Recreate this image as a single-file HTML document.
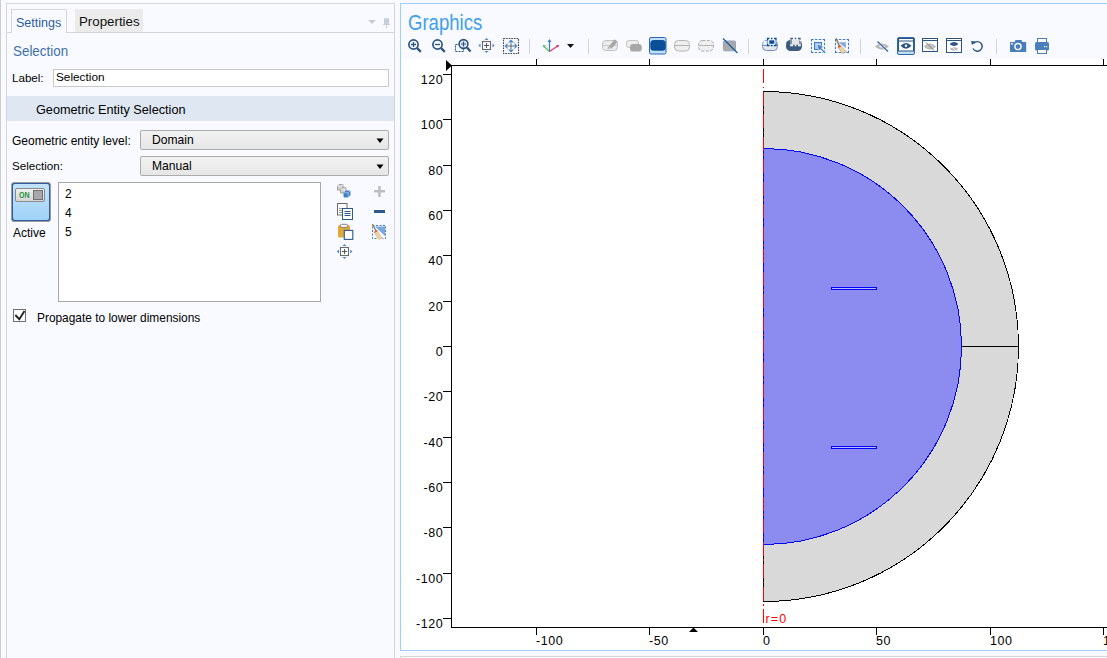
<!DOCTYPE html>
<html><head><meta charset="utf-8">
<style>
html,body{margin:0;padding:0;}
body{width:1107px;height:658px;overflow:hidden;position:relative;background:#f8faff;font-family:"Liberation Sans",sans-serif;color:#000;}
.a{position:absolute;}
.t{position:absolute;white-space:nowrap;line-height:1;font-size:12px;}
</style></head><body>
<!-- far-left line -->
<div class="a" style="left:0;top:0;width:1px;height:658px;background:#cdcdcd"></div>

<!-- ===== LEFT SETTINGS PANEL ===== -->
<div class="a" style="left:6px;top:3px;width:387px;height:700px;border:1px solid #d6d6d6;background:#f8faff"></div>
<!-- tab strip line -->
<div class="a" style="left:7px;top:32px;width:387px;height:1px;background:#d6d6d6"></div>
<!-- Settings tab -->
<div class="a" style="left:11px;top:9px;width:54px;height:23px;border:1px solid #d6d6d6;border-bottom:none;background:#f8faff"></div>
<div class="t" id="tSettings" style="left:16px;top:17px;font-size:12.5px;color:#2e5c9c">Settings</div>
<!-- Properties tab -->
<div class="a" style="left:75px;top:9px;width:68px;height:23px;background:#ebebeb"></div>
<div class="t" id="tProps" style="left:79px;top:15px;font-size:13.3px;color:#111">Properties</div>
<!-- header icons -->
<svg class="a" style="left:360px;top:14px" width="34" height="18">
  <path d="M8 6 L16 6 L12 10 Z" fill="#c5cbd6"/>
  <path d="M24 4.3 H29 V10 H30 V11 H27 V14.3 H26 V11 H23 V10 H24 Z" fill="#c8cfdb"/>
</svg>

<div class="t" id="tSel" style="left:13.3px;top:43.3px;font-size:15.4px;color:#4070ae;transform:scaleX(0.87);transform-origin:0 0">Selection</div>

<div class="t" id="tLabel" style="left:12px;top:72px;font-size:11.6px">Label:</div>
<div class="a" style="left:53px;top:69px;width:334px;height:16px;border:1px solid #c9c9c9;background:#fff"></div>
<div class="t" id="tLabelV" style="left:56px;top:72.2px;font-size:11.8px">Selection</div>

<div class="a" style="left:7px;top:96px;width:387px;height:25px;background:#dee7f2"></div>
<div class="t" id="tGES" style="left:36px;top:104px;font-size:12.7px">Geometric Entity Selection</div>

<div class="t" id="tGEL" style="left:12px;top:135px;">Geometric entity level:</div>
<div class="a" style="left:140px;top:130px;width:247px;height:18px;border:1px solid #acacac;border-radius:2px;background:linear-gradient(#f2f2f2,#e6e6e6)"></div>
<div class="t" id="tDom" style="left:152px;top:134.2px;font-size:12.1px">Domain</div>
<svg class="a" style="left:376px;top:138px" width="9" height="6"><path d="M0.5 0.5 H7.5 L4 5 Z" fill="#000"/></svg>

<div class="t" id="tSelL" style="left:12px;top:159.7px;font-size:11.6px">Selection:</div>
<div class="a" style="left:140px;top:156px;width:247px;height:18px;border:1px solid #acacac;border-radius:2px;background:linear-gradient(#f2f2f2,#e6e6e6)"></div>
<div class="t" id="tMan" style="left:152px;top:160.2px;font-size:12.1px">Manual</div>
<svg class="a" style="left:376px;top:164px" width="9" height="6"><path d="M0.5 0.5 H7.5 L4 5 Z" fill="#000"/></svg>

<!-- Active toggle -->
<div class="a" style="left:11px;top:182px;width:38px;height:38px;border:1px solid #9a9a9a;border-radius:3px;background:#2f5e9e"></div><div class="a" style="left:13px;top:184px;width:36px;height:36px;border-radius:2px;background:linear-gradient(#c2e3fb,#a0d2f6)"></div>
<div class="a" style="left:15px;top:188px;width:28px;height:12px;border:1px solid #8a8a8a;border-radius:2px;background:linear-gradient(#efefef,#d6d6d6)"></div>
<div class="t" style="left:18.5px;top:191px;font-size:8.3px;font-weight:bold;color:#1e9636;transform:scaleX(0.85);transform-origin:0 0">ON</div>
<div class="a" style="left:33px;top:189.5px;width:8px;height:8px;border:1px solid #707070;background:#a8a8a8"></div>
<div class="t" id="tActive" style="left:13px;top:227px;">Active</div>

<!-- list box -->
<div class="a" style="left:58px;top:182px;width:261px;height:118px;border:1px solid #a4a7ad;background:#fff"></div>
<div class="t" style="left:65px;top:188px;">2</div>
<div class="t" style="left:65px;top:207px;">4</div>
<div class="t" style="left:65px;top:226px;">5</div>

<!-- list side icons -->
<svg class="a" style="left:330px;top:180px" width="64" height="82">
  <!-- cubes -->
  <g><path d="M7.5 6.15 L9.15 4.5 L13.0 4.5 L13.0 8.35 L11.35 10.0 L7.5 10.0 Z" fill="#cfcfcf" stroke="#9a9a9a" stroke-width="0.9"/><path d="M7.5 6.15 H11.35 V10.0 M11.35 6.15 L13.0 4.5" stroke="#f2f2f2" stroke-width="0.8" fill="none"/><path d="M10.5 9.15 L12.15 7.5 L16.0 7.5 L16.0 11.35 L14.35 13.0 L10.5 13.0 Z" fill="#cfcfcf" stroke="#9a9a9a" stroke-width="0.9"/><path d="M10.5 9.15 H14.35 V13.0 M14.35 9.15 L16.0 7.5" stroke="#f2f2f2" stroke-width="0.8" fill="none"/><path d="M14 12.8 L15.8 11 L20 11 L20 15.2 L18.2 17 L14 17 Z" fill="#3f7fc8" stroke="#3f7fc8" stroke-width="0.9"/><path d="M14 12.8 H18.2 V17 M18.2 12.8 L20 11" stroke="#a9cbf0" stroke-width="0.8" fill="none"/></g>
  <!-- plus -->
  <rect x="44" y="10" width="11" height="2.5" fill="#bdbdbd"/>
  <rect x="48.2" y="6" width="2.5" height="11" fill="#bdbdbd"/>
  <!-- copy -->
  <rect x="7.5" y="23.5" width="9.5" height="11.5" fill="#fff" stroke="#6a6a6a"/><path d="M9 28.5 H12 M9 30.5 H12 M9 32.5 H12" stroke="#9a9a9a"/>
  <rect x="12.5" y="28.5" width="10" height="11" fill="#fff" stroke="#2d5a8c"/>
  <path d="M14.5 31.5 H20.5 M14.5 33.5 H20.5 M14.5 35.5 H20.5" stroke="#2d5a8c"/>
  <!-- minus -->
  <rect x="44" y="30" width="11" height="3" fill="#2d5a8c"/>
  <!-- clipboard -->
  <rect x="8" y="45" width="12" height="12.5" rx="1.5" fill="#e0a83a"/>
  <rect x="10.5" y="44.3" width="7" height="3" rx="1.2" fill="#fff" stroke="#808080"/>
  <rect x="14.3" y="50.4" width="8.5" height="9" fill="#fff" stroke="#2d5a8c" stroke-width="1.1"/>
  <!-- broom box -->
  <rect x="42.5" y="45.5" width="13" height="13" fill="none" stroke="#3f7fc8" stroke-dasharray="2 1.5"/>
  <path d="M45 46.5 L55 46.5 L55 56 Z" fill="#7aa6db"/>
  <path d="M42.5 44 L46.5 52" stroke="#8f7250" stroke-width="1.3"/>
  <path d="M44 53 L48 51 L53 58.5 L48.5 60 Z" fill="#e8cfa4"/>
  <path d="M44 52.5 L47.5 50.5" stroke="#d9533a" stroke-width="1.3"/>
  <!-- move -->
  <rect x="10.5" y="67.5" width="8" height="8" fill="#fff" stroke="#6a6a6a" stroke-width="1.1"/>
  <path d="M14.5 69 V74 M12 71.5 H17" stroke="#555"/>
  <path d="M14.5 64 L16.5 66 H12.5 Z M14.5 79 L16.5 77 H12.5 Z M6.8 71.5 L9 69.5 V73.5 Z M22.4 71.5 L20.2 69.5 V73.5 Z" fill="#4a86cf"/>
</svg>

<!-- checkbox -->
<div class="a" style="left:13px;top:309px;width:11px;height:11px;border:1px solid #6f6f6f;background:#fff"></div>
<svg class="a" style="left:13px;top:309px" width="13" height="13"><path d="M2.3 6 L6.3 10.2 L11.5 2" fill="none" stroke="#222" stroke-width="1.9"/></svg>
<div class="t" id="tProp" style="left:37px;top:313px;font-size:11.9px">Propagate to lower dimensions</div>

<!-- ===== GRAPHICS PANEL ===== -->
<div class="a" style="left:400px;top:3px;width:720px;height:646px;border:1px solid #9ecffa;background:#f8faff"></div>
<div class="a" style="left:401px;top:59px;width:720px;height:591px;background:#fff"></div>
<div class="a" style="left:400px;top:656px;width:720px;height:10px;border:1px solid #d6d6d6;background:#f8faff"></div>
<div class="t" id="tGraph" style="left:408.3px;top:10.7px;font-size:22.7px;color:#3f9fee;transform:scaleX(0.817);transform-origin:0 0">Graphics</div>

<!-- toolbar -->
<svg class="a" style="left:0;top:0" width="1107" height="58" viewBox="0 0 1107 58">
<g fill="none" stroke-linecap="butt">
  <!-- zoom in -->
  <circle cx="413.5" cy="44.5" r="4.6" stroke="#2b5482" stroke-width="1.7"/>
  <path d="M411 44.5 H416 M413.5 42 V47" stroke="#2b5482" stroke-width="1.3"/>
  <path d="M417 48 L420.8 51.8" stroke="#2b5482" stroke-width="2.4"/>
  <!-- zoom out -->
  <circle cx="437.5" cy="44.5" r="4.6" stroke="#2b5482" stroke-width="1.7"/>
  <path d="M435 44.5 H440" stroke="#2b5482" stroke-width="1.3"/>
  <path d="M441 48 L444.8 51.8" stroke="#2b5482" stroke-width="2.4"/>
  <!-- zoom box -->
  <rect x="455.5" y="44.5" width="8" height="7" stroke="#2b5482" stroke-width="1.1" stroke-dasharray="2 1"/>
  <circle cx="463.5" cy="44" r="4.4" fill="#e9edf3" stroke="#2b5482" stroke-width="1.6"/>
  <path d="M461 44 H466 M463.5 41.5 V46.5" stroke="#2b5482" stroke-width="1.2"/>
  <path d="M467 47.5 L470.5 51.5" stroke="#2b5482" stroke-width="2.3"/>
  <!-- pan / move -->
  <rect x="482.5" y="41.5" width="8" height="8" stroke="#6a6a6a" stroke-width="1.1"/>
  <path d="M486.5 43 V48 M484 45.5 H489" stroke="#555" stroke-width="1"/>
  <path d="M486.5 38 L488.5 40 H484.5 Z M486.5 53 L488.5 51 H484.5 Z M478.5 45.5 L480.5 43.5 V47.5 Z M494.5 45.5 L492.5 43.5 V47.5 Z" fill="#4a86cf" stroke="none"/>
  <!-- zoom extents -->
  <rect x="503.5" y="38.5" width="15" height="15" stroke="#444" stroke-width="1.1" stroke-dasharray="1.6 1"/>
  <path d="M511 39.5 L514 42.5 H508 Z M511 52.5 L514 49.5 H508 Z M504.5 46 L507.5 43 V49 Z M517.5 46 L514.5 43 V49 Z" fill="#4a86cf" stroke="none"/>
  <path d="M511 43 V49 M508 46 H514" stroke="#666" stroke-width="1"/>
  <!-- separators -->
  <path d="M529.5 39 V54 M588.5 39 V54 M748.5 39 V54 M860.5 39 V54 M996.5 39 V54" stroke="#d2d4d8" stroke-width="1"/>
  <!-- axis icon -->
  <path d="M549.5 51.5 V40" stroke="#3d7cc9" stroke-width="1.2"/>
  <path d="M547.5 42 L549.5 39 L551.5 42 Z" fill="#3d7cc9" stroke="none"/>
  <path d="M549.5 51.5 L543.5 46" stroke="#5cb85c" stroke-width="1.2"/>
  <path d="M542.5 45 L546 45.5 L544 47.5 Z" fill="#5cb85c" stroke="none"/>
  <path d="M549.5 51.5 L558.5 45.5" stroke="#e0306a" stroke-width="1.2"/>
  <path d="M559.5 45 L556 45.3 L557.5 47.5 Z" fill="#e0306a" stroke="none"/>
  <path d="M567 44 H574 L570.5 48 Z" fill="#111" stroke="none"/>
  <!-- edit shape (disabled) -->
  <rect x="602.5" y="40.5" width="15" height="10" rx="3.5" fill="#eeeeee" stroke="#c0c0c0"/>
  <path d="M603 45.5 H617" stroke="#c8c8c8"/>
  <path d="M608.8 46.3 L614.8 39.3 L617.6 41.7 L611.6 48.7 Z" fill="#a8a8a8" stroke="none"/>
  <path d="M607.3 49 L608.4 46.4 L610.6 48.3 Z" fill="#a8a8a8" stroke="none"/>
  <!-- two rects -->
  <rect x="626.5" y="40.5" width="12" height="7" rx="2.5" fill="#ededed" stroke="#c4c4c4"/>
  <rect x="630" y="43.9" width="11.8" height="7.7" rx="3.2" fill="#a8a8a8" stroke="none"/>
  <!-- selected button -->
  <rect x="649.5" y="37.5" width="16.5" height="16.5" rx="1.5" fill="#bfe0fb" stroke="#2f66b3" stroke-width="1"/>
  <rect x="650.3" y="40" width="15.4" height="10.8" rx="3.5" fill="#0b4e98" stroke="none"/>
  <!-- rect with line -->
  <rect x="674.5" y="40.5" width="15" height="10.5" rx="4" fill="#efefef" stroke="#b4b4b4"/>
  <path d="M675 45.5 H689" stroke="#b4b4b4"/>
  <!-- dashed rect with line -->
  <rect x="698.5" y="40.5" width="15" height="10.5" rx="4" fill="#efefef" stroke="#aaaaaa" stroke-dasharray="3 1.5"/>
  <path d="M699 45.5 H713" stroke="#b4b4b4"/>
  <!-- gray square w slash -->
  <rect x="723.5" y="41" width="12" height="9.8" rx="1.2" fill="#ababab" stroke="#8ea4c0"/>
  <path d="M723 38.5 L737.5 53" stroke="#1f5a99" stroke-width="1.2"/>
  <!-- G -->
  <rect x="762.5" y="40.5" width="15" height="10" rx="4" fill="#e6e6e6" stroke="#6a8fbd"/>
  <path d="M763.5 43 H776.5" stroke="#f2f2f2" stroke-width="4"/>
  <path d="M763 45.5 H777" stroke="#6a8fbd"/>
  <rect x="767.5" y="38.5" width="8.5" height="7" fill="#f8faff" stroke="none"/>
  <path d="M767.5 40.5 V38.5 H769.5 M774 38.5 H776 V40.5 M776 43.5 V45.5 H774 M769.5 45.5 H767.5 V43.5 M770.95 38.5 H772.55 M770.95 45.5 H772.55 M767.5 41.4 V42.6 M776 41.4 V42.6" stroke="#0d4f9a" stroke-width="1.3" fill="none"/>
  <rect x="769.3" y="40.3" width="5" height="3.5" fill="#0d4f9a" stroke="none"/>
  <!-- H -->
  <rect x="786" y="40" width="16" height="11" rx="4.5" fill="#3d5a80" stroke="none"/>
  
  <path d="M792 40 H799 V44.8 H792 Z" fill="#e4e4e4" stroke="none"/>
  <path d="M791 40.5 V38.5 H793 M798 38.5 H800 V40.5 M800 43.5 V45.5 H798 M793 45.5 H791 V43.5 M794.7 38.5 H796.3 M794.7 45.5 H796.3 M791 41.4 V42.6 M800 41.4 V42.6" stroke="#ffffff" stroke-width="1.4" fill="none"/>
  <rect x="789" y="37" width="13" height="2.6" fill="#f8faff" stroke="none"/>
  <path d="M791 39.8 V38.5 H793 M798 38.5 H800 V39.8 M794.7 38.5 H796.3" stroke="#3d5a80" stroke-width="1.3" fill="none"/>
  <!-- I -->
  <path d="M811.5 41.5 V39.5 H813.5 M822.5 39.5 H824.5 V41.5 M824.5 50.5 V52.5 H822.5 M813.5 52.5 H811.5 V50.5 M814.90 39.5 h2.4 M814.90 52.5 h2.4 M818.70 39.5 h2.4 M818.70 52.5 h2.4 M811.5 42.90 v2.4 M824.5 42.90 v2.4 M811.5 46.70 v2.4 M824.5 46.70 v2.4 " stroke="#3d7cc9" stroke-width="1.1" fill="none"/>
  <rect x="814.5" y="42.5" width="7" height="7" fill="#a9c8ec" stroke="#3d7cc9"/>
  <path d="M817 44 L824 46.8 L821.3 47.9 L825.8 52.4 L824.6 53.6 L820.1 49.1 L819 51.8 Z" fill="#3d7cc9" stroke="#f8faff" stroke-width="0.6"/>
  <!-- J broom -->
  <path d="M835.5 41.5 V39.5 H837.5 M846.5 39.5 H848.5 V41.5 M848.5 50.5 V52.5 H846.5 M837.5 52.5 H835.5 V50.5 M838.90 39.5 h2.4 M838.90 52.5 h2.4 M842.70 39.5 h2.4 M842.70 52.5 h2.4 M835.5 42.90 v2.4 M848.5 42.90 v2.4 M835.5 46.70 v2.4 M848.5 46.70 v2.4 " stroke="#3d7cc9" stroke-width="1.1" fill="none"/>
  <path d="M838.6 42.3 H845.8 V48.3 Z" fill="#7fa8dc" stroke="none"/>
  <path d="M836 38.4 L839.6 46.5" stroke="#8f7250" stroke-width="1.4"/>
  <path d="M838.3 47.5 L841.2 46.3 L846.2 51.8 L842.6 53.6 Z" fill="#ecd3ac" stroke="#a08060" stroke-width="0.5"/>
  <path d="M838 47 L840.8 45.8" stroke="#d9533a" stroke-width="1.5"/>
  <!-- K eye slash gray -->
  <path d="M875 46.5 Q882 40.5 889 46.5 Q882 52.5 875 46.5 Z" fill="#b4b4b4" stroke="none"/>
  <path d="M878.5 46.5 Q882 44.3 885.5 46.5 Q882 48.7 878.5 46.5 Z" fill="#f8faff" stroke="none"/>
  <path d="M877.5 41.5 L888 51.5" stroke="#f8faff" stroke-width="2.4"/>
  <path d="M877.5 41.5 L888 51.5" stroke="#2f5f9c" stroke-width="1.2"/>
  <!-- L selected eye window -->
  <rect x="897.5" y="37.5" width="17" height="17" rx="1.5" fill="#bfe0fb" stroke="#2f66b3"/>
  <rect x="898.5" y="38.5" width="15" height="12.5" fill="#fff" stroke="#2b5482"/>
  <path d="M899 41 H913" stroke="#2b5482"/>
  <path d="M900.5 45.8 Q906 40 911.5 45.8 Q906 51.6 900.5 45.8 Z" fill="#2b5482" stroke="none"/><circle cx="906" cy="45.8" r="1.2" fill="#fff"/>
  <!-- M window eye slash -->
  <rect x="922.5" y="38.5" width="15" height="13" fill="#fff" stroke="#2b5482"/>
  <path d="M923 40.5 H937.5" stroke="#2b5482"/>
  <path d="M924.5 46.5 Q930 41.5 935.5 46.5 Q930 51.5 924.5 46.5 Z" fill="#c4c4c4" stroke="#b0b0b0" stroke-width="1"/>
  <path d="M926 42.5 L934 50.5" stroke="#7a7a7a" stroke-width="1"/>
  <!-- N window eye + slashed -->
  <rect x="946.5" y="38.5" width="15" height="14" fill="#fff" stroke="#2b5482"/>
  <path d="M947 40.5 H961.5" stroke="#2b5482"/>
  <path d="M949.5 44 Q954 40 958.5 44 Q954 48 949.5 44 Z" fill="#2b5482" stroke="none"/>
  <path d="M949.5 49 Q954 45.5 958.5 49 Q954 52.5 949.5 49 Z" fill="#b8b8b8" stroke="none"/><path d="M951 46 L957 52" stroke="#fff" stroke-width="0.8"/>
  <!-- O undo -->
  <path d="M973.5 43.5 A4.8 4.8 0 1 1 973 48.5" stroke="#2b5482" stroke-width="1.4"/>
  <path d="M971 41 L975.5 41.5 L972 45 Z" fill="#2b5482" stroke="none"/>
  <!-- P camera -->
  <rect x="1010" y="42" width="16.2" height="10" rx="0.5" fill="#4a7ebb" stroke="none"/>
  <path d="M1014.5 42.2 L1015.5 40 H1021.5 L1022.5 42.2 Z" fill="#4a7ebb" stroke="none"/>
  <circle cx="1018" cy="46.6" r="3.1" fill="#4a7ebb" stroke="#fff" stroke-width="1.3"/>
  <rect x="1011.2" y="43" width="1.6" height="1.6" fill="#fff" stroke="none"/>
  <!-- Q printer -->
  <rect x="1037.5" y="38.5" width="9" height="4" fill="#fff" stroke="#4a7ebb"/>
  <rect x="1035" y="42" width="14" height="8.5" rx="1.5" fill="#4a7ebb" stroke="none"/>
  <rect x="1037.5" y="49.5" width="9" height="4" fill="#fff" stroke="#4a7ebb"/>
  <rect x="1044" y="46" width="1.2" height="1.2" fill="#fff" stroke="none"/>
  <rect x="1046" y="46" width="1.2" height="1.2" fill="#fff" stroke="none"/>
</g>
</svg>
<!-- plot -->
<svg id="plot" class="a" style="left:0;top:0" width="1107" height="658" viewBox="0 0 1107 658">
<g shape-rendering="crispEdges">
<path d="M763.5 91.5 A255 255 0 0 1 763.5 601.5 Z" fill="#d9d9d9" stroke="#000" stroke-width="1"/>
<path d="M763.5 148.5 A198 198 0 0 1 763.5 544.5 Z" fill="#8c8cf0" stroke="#0000ff" stroke-width="1"/>
<path d="M961.5 346.5 H1018.5" stroke="#000"/>
<path d="M763.5 148.5 V544.5" stroke="#0000ff"/>
<rect x="831.5" y="287.5" width="45" height="2" fill="#b9b9f7" stroke="#0000ff"/>
<rect x="831.5" y="446.5" width="45" height="2" fill="#b9b9f7" stroke="#0000ff"/>
<path d="M763.5 59 V627" stroke="#ff0000" stroke-width="1" stroke-dasharray="14 3.5 1.5 3.5" stroke-dashoffset="12.5"/>
<path d="M451.5 65 V627.5 H1107 M451 65.5 H1107" stroke="#000" stroke-width="1" fill="none"/>
<path d="M443 74.5 H451 M443 119.5 H451 M443 165.5 H451 M443 210.5 H451 M443 255.5 H451 M443 301.5 H451 M443 346.5 H451 M443 391.5 H451 M443 437.5 H451 M443 482.5 H451 M443 527.5 H451 M443 573.5 H451 M443 618.5 H451 M536.5 627 V635 M536.5 59 V65 M649.5 627 V635 M649.5 59 V65 M763.5 627 V635 M763.5 59 V65 M876.5 627 V635 M876.5 59 V65 M990.5 627 V635 M990.5 59 V65 M1103.5 627 V635 M1103.5 59 V65 " stroke="#000" stroke-width="1"/>
</g>
<path d="M446 60 L452 65.5 L446 71 Z" fill="#000"/>
<path d="M689 632 L693.5 627.5 L698 632 Z" fill="#000"/>
<g font-family="Liberation Sans" font-size="12.5" letter-spacing="0.6" fill="#000"><text x="443.3" y="84" text-anchor="end">120</text><text x="443.3" y="129" text-anchor="end">100</text><text x="443.3" y="175" text-anchor="end">80</text><text x="443.3" y="220" text-anchor="end">60</text><text x="443.3" y="265" text-anchor="end">40</text><text x="443.3" y="311" text-anchor="end">20</text><text x="443.3" y="356" text-anchor="end">0</text><text x="443.3" y="401" text-anchor="end">-20</text><text x="443.3" y="447" text-anchor="end">-40</text><text x="443.3" y="492" text-anchor="end">-60</text><text x="443.3" y="537" text-anchor="end">-80</text><text x="443.3" y="583" text-anchor="end">-100</text><text x="443.3" y="628" text-anchor="end">-120</text><text x="536" y="645">-100</text><text x="649" y="645">-50</text><text x="763" y="645">0</text><text x="876" y="645">50</text><text x="990" y="645">100</text><text x="1103" y="645">150</text></g>
<text x="765.5" y="623" font-family="Liberation Sans" font-size="12.5" fill="#ff0000" letter-spacing="1.2">r=0</text>
</svg>

</body></html>
